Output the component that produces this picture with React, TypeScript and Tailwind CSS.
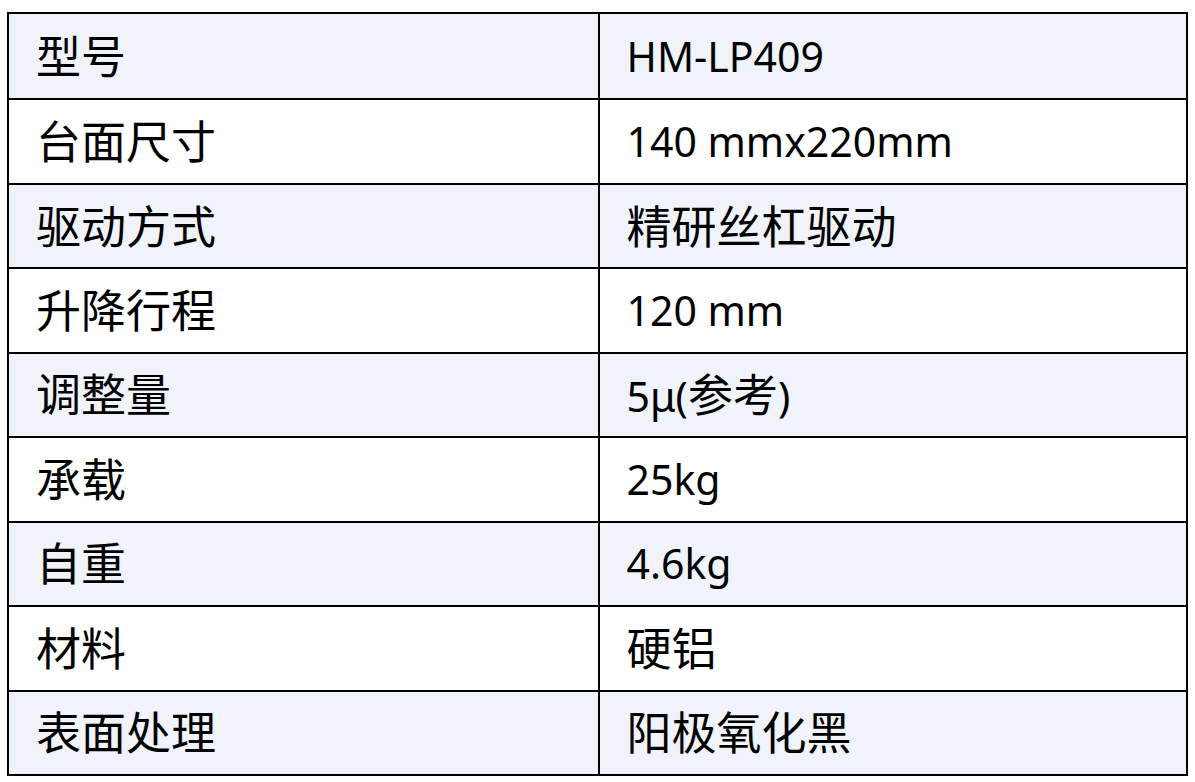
const rows: [string, string][] = [
  ['型号', 'HM-LP409'],
  ['台面尺寸', '140 mmx220mm'],
  ['驱动方式', '精研丝杠驱动'],
  ['升降行程', '120 mm'],
  ['调整量', '5μ(参考)'],
  ['承载', '25kg'],
  ['自重', '4.6kg'],
  ['材料', '硬铝'],
  ['表面处理', '阳极氧化黑'],
];

// CJK glyphs run a bit larger than the Latin ones in the source
function Mixed({ text }: { text: string }) {
  const parts = text.split(/([\u4e00-\u9fff]+)/).filter(Boolean);
  return (
    <span>
      {parts.map((p, i) =>
        /[\u4e00-\u9fff]/.test(p) ? (
          <span key={i} className="text-[45px]">{p}</span>
        ) : (
          <span key={i}>{p}</span>
        )
      )}
    </span>
  );
}

export default function App() {
  return (
    <div className="w-[1195px] h-[782px] bg-white pt-[12px] pl-[7px]">
      <div
        className="w-[1181px] h-[764px] border-2 border-black grid grid-rows-9 text-black text-[41px]"
        style={{ fontFamily: '"Noto Sans", "Noto Sans CJK SC", sans-serif' }}
      >
        {rows.map(([k, v], i) => (
          <div
            key={k}
            className={`grid grid-cols-2 ${i > 0 ? 'border-t-2 border-black' : ''} ${
              i % 2 === 0 ? 'bg-[#f0f3f9]' : 'bg-white'
            }`}
          >
            <div className="flex items-center pl-[27px] leading-none">
              <Mixed text={k} />
            </div>
            <div className="flex items-center pl-[27px] border-l-2 border-black leading-none">
              <Mixed text={v} />
            </div>
          </div>
        ))}
      </div>
    </div>
  );
}
